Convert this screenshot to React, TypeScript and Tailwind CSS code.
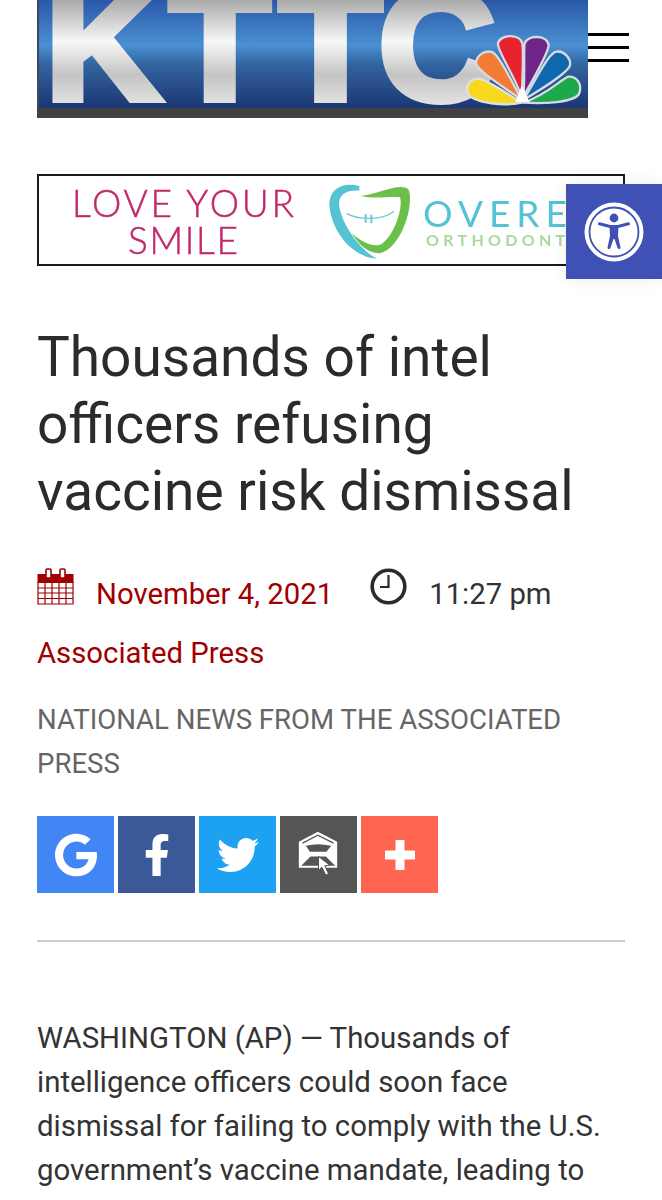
import React from 'react';
import { FaFacebookF, FaGoogle, FaTwitter } from 'react-icons/fa';

const LOGO_LETTERS = [
  { ch: 'K', x: 46, len: 114 },
  { ch: 'T', x: 169.7, len: 100 },
  { ch: 'T', x: 279.6, len: 102 },
  { ch: 'C', x: 379, len: 116 },
];

function KttcLogo() {
  return (
    <svg viewBox="37 0 551 118" className="block w-[551px] h-[118px] blur-[0.5px]">
      <defs>
        <linearGradient id="logoBg" gradientUnits="userSpaceOnUse" x1="0" y1="0" x2="0" y2="108">
          <stop offset="0" stopColor="#2a58a8" />
          <stop offset="0.42" stopColor="#4a90d2" />
          <stop offset="0.6" stopColor="#32649f" />
          <stop offset="1" stopColor="#1b3674" />
        </linearGradient>
        <linearGradient id="logoMetal" gradientUnits="userSpaceOnUse" x1="0" y1="0" x2="0" y2="104">
          <stop offset="0" stopColor="#a9a9a9" />
          <stop offset="0.4" stopColor="#f8f8f8" />
          <stop offset="0.72" stopColor="#c4c4c4" />
          <stop offset="1" stopColor="#e2e2e2" />
        </linearGradient>
      </defs>
      <rect x="37" y="0" width="551" height="109" fill="url(#logoBg)" />
      <rect x="37" y="0" width="2" height="109" fill="#3c4a5e" />
      <rect x="37" y="108" width="551" height="10" fill="#414141" />
      {LOGO_LETTERS.map((l, i) => (
        <text
          key={i}
          x={l.x}
          y="99"
          textLength={l.len}
          lengthAdjust="spacingAndGlyphs"
          fill="url(#logoMetal)"
          stroke="url(#logoMetal)"
          strokeWidth="8"
          fontFamily="Liberation Sans, sans-serif"
          fontWeight="700"
          fontSize="155"
        >
          {l.ch}
        </text>
      ))}
      {/* peacock, traced in 3x crop coordinates */}
      <g transform="translate(440 0) scale(0.3333)" stroke="#d5dbe2" strokeWidth="7">
        <path d="M245,308 C200,318 100,312 84,280 C74,250 100,230 125,238 C160,250 215,290 245,308 Z" fill="#f9d71c" stroke="#dfe2dc" />
        <path d="M245,300 C190,260 115,215 108,190 C110,162 140,148 160,158 C185,175 225,265 245,300 Z" fill="#f47b35" />
        <path d="M245,290 C220,220 170,150 174,130 C180,103 238,100 247,130 C252,160 247,240 245,290 Z" fill="#e9222f" />
        <path d="M250,290 C256,220 250,150 254,130 C265,103 322,105 326,135 C326,160 280,235 250,290 Z" fill="#6f2488" />
        <path d="M250,300 C290,235 320,170 345,156 C370,148 394,175 390,197 C380,222 300,270 250,300 Z" fill="#0f68ad" />
        <path d="M250,308 C320,285 360,240 385,230 C412,228 428,255 417,282 C400,308 310,312 250,308 Z" fill="#1ea84c" />
        <path d="M226,306 L246,255 L268,306 Z" fill="#ffffff" stroke="none" />
      </g>
    </svg>
  );
}

function OrthoBanner() {
  return (
    <div className="border-2 border-[#1a1a1a] h-[92px] overflow-hidden">
      <svg viewBox="39 176 584 88" className="block w-[584px] h-[88px] blur-[0.4px]">
        <g fontFamily="Lato, sans-serif" fontWeight="300" stroke="#c2286c" strokeWidth="0.5">
          <text x="183" y="217" textAnchor="middle" fontSize="37" fill="#c2286c" textLength="222" lengthAdjust="spacing">
            LOVE YOUR
          </text>
          <text x="183" y="254" textAnchor="middle" fontSize="37" fill="#c2286c" textLength="110" lengthAdjust="spacing">
            SMILE
          </text>
        </g>
        <g fontFamily="Lato, sans-serif">
          <text x="423" y="227" fontSize="37" fontWeight="400" fill="#55c3d3" letterSpacing="6">
            OVERE
          </text>
          <text x="426" y="246" fontSize="16" fontWeight="700" fill="#a8d89b" letterSpacing="4.3">
            ORTHODONT
          </text>
        </g>
        <g transform="translate(300 170) scale(0.3333)">
          <path
            d="M178,48 C130,36 88,55 88,105 C92,175 150,262 232,266 C190,248 130,175 118,110 C112,75 140,58 178,62 Z"
            fill="#55c3d3"
          />
          <path
            d="M182,78 C235,72 300,36 325,58 C345,100 305,235 240,250 C205,252 175,222 155,190 C185,215 220,235 245,222 C285,195 310,110 300,82 C270,78 225,88 182,78 Z"
            fill="#6cc04a"
          />
          <path d="M140,130 C170,148 245,155 282,124" fill="none" stroke="#6ec9d6" strokeWidth="4" />
          <path d="M197,132 V158 M214,134 V160" stroke="#6ec9d6" strokeWidth="6" />
        </g>
      </svg>
    </div>
  );
}

function AccessibilityButton() {
  return (
    <div className="absolute left-[566px] top-[184px] w-[96px] h-[95px] bg-[#3f51b5] flex items-center justify-center shadow-[0_0_16px_rgba(0,0,0,0.08)]">
      <svg viewBox="0 0 60 60" className="w-[60px] h-[60px]">
        <circle cx="30" cy="30" r="29.500" fill="#ffffff" />
        <circle cx="30" cy="30" r="24.500" fill="none" stroke="#3f51b5" strokeWidth="1.8" />
        <circle cx="30" cy="16" r="4.400" fill="#3f51b5" />
        <path d="M15.500 21.800 L26 24.500 H34 L44.500 21.800" fill="none" stroke="#3f51b5" strokeWidth="3" strokeLinecap="round" />
        <path
          d="M25.500 24 H34.500 L34 34 L36.500 45.500 C36.500 47.500 34 47.500 33.500 45.800 L30.500 37 H29.500 L26.500 45.800 C26 47.500 23.500 47.500 23.500 45.500 L26 34 Z"
          fill="#3f51b5"
        />
      </svg>
    </div>
  );
}

function CalendarIcon() {
  return (
    <svg viewBox="0 0 37 37" className="w-[37px] h-[37px] shrink-0" fill="none" stroke="#a00000">
      <path d="M0.500 6 H36.500 V15 H0.500 Z" fill="#a00000" stroke="none" />
      <rect x="9" y="1" width="5" height="9" rx="1" fill="#ffffff" strokeWidth="1.6" />
      <rect x="23" y="1" width="5" height="9" rx="1" fill="#ffffff" strokeWidth="1.6" />
      <path
        d="M1 14 V36 H36 V14 M1 20 H36 M1 25 H36 M1 30.500 H36 M8 15 V36 M15 15 V36 M22 15 V36 M29 15 V36"
        strokeWidth="1.2"
      />
    </svg>
  );
}

function ClockIcon() {
  return (
    <svg viewBox="0 0 37 37" className="w-[37px] h-[37px] shrink-0" fill="none" stroke="#2b2b2b">
      <circle cx="18.500" cy="18.500" r="16.300" strokeWidth="3.600" />
      <path d="M18.500 7 V19 H10" strokeWidth="2.200" />
    </svg>
  );
}

function EmailIcon() {
  return (
    <svg viewBox="-4.500 1.500 180 180" className="w-[60px] h-[60px]">
      <path d="M25,52 L82,22 L140,52 V130 H25 Z" fill="#ffffff" />
      <path d="M36,56 L82,32 L129,56" fill="none" stroke="#555555" strokeWidth="4" />
      <path d="M46,64 Q82,54 122,64 L108,82 H58 Z" fill="#555555" />
      <path d="M32,124 L60,96 H106 L134,124 Z" fill="#555555" />
      <path
        d="M84,96 L84,138 L94,128 L106,152 L114,148 L103,124 L118,122 Z"
        fill="#ffffff"
        stroke="#555555"
        strokeWidth="3"
      />
    </svg>
  );
}

function PlusIcon() {
  return (
    <svg viewBox="0 0 30 30" className="w-[30px] h-[30px]" fill="#ffffff">
      <path d="M10.500 0 H19.500 V10.500 H30 V19.500 H19.500 V30 H10.500 V19.500 H0 V10.500 H10.500 Z" />
    </svg>
  );
}

export default function App() {
  return (
    <div className="relative w-[662px] h-[1200px] overflow-hidden bg-white font-['Roboto',sans-serif] text-[#2d2d2d]">
      <header className="flex items-start pl-[37px]">
        <KttcLogo />
        <div className="mt-[33px] flex w-[41px] flex-col gap-[10px]">
          <span className="h-[3px] bg-black" />
          <span className="h-[3px] bg-black" />
          <span className="h-[3px] bg-black" />
        </div>
      </header>

      <main className="px-[37px]">
        <div className="mt-[56px]">
          <OrthoBanner />
        </div>

        <h1 className="mt-[58px] text-[55px] leading-[67px] font-normal text-[#2b2b2b]">
          Thousands of intel officers refusing vaccine risk dismissal
        </h1>

        <div className="mt-[43px] flex items-start text-[29.300px] leading-[44px]">
          <CalendarIcon />
          <span className="ml-[22px] mt-[4px] text-[#a00000]">November 4, 2021</span>
          <span className="ml-[37px]">
            <ClockIcon />
          </span>
          <span className="ml-[22px] mt-[4px] text-[#333333]">11:27 pm</span>
        </div>

        <p className="mt-[15px] text-[29.300px] leading-[44px] text-[#a00000]">Associated Press</p>

        <p className="mt-[23px] text-[27.600px] leading-[44px] text-[#666666]">
          NATIONAL NEWS FROM THE ASSOCIATED PRESS
        </p>

        <div className="mt-[30px] flex gap-[4px]">
          <a className="flex h-[77px] w-[77px] items-center justify-center bg-[#4285f4] text-[44px] text-white">
            <FaGoogle />
          </a>
          <a className="flex h-[77px] w-[77px] items-center justify-center bg-[#3b5998] text-[42px] text-white">
            <FaFacebookF />
          </a>
          <a className="flex h-[77px] w-[77px] items-center justify-center bg-[#1da1f2] text-[42px] text-white">
            <FaTwitter />
          </a>
          <a className="flex h-[77px] w-[77px] items-center justify-center bg-[#555555] text-white">
            <EmailIcon />
          </a>
          <a className="flex h-[77px] w-[77px] items-center justify-center bg-[#ff6550] text-white">
            <PlusIcon />
          </a>
        </div>

        <hr className="mt-[47px] border-t-2 border-[#cccccc]" />

        <p className="mt-[74px] text-[29.400px] leading-[44px] text-[#333333]">
          WASHINGTON (AP) — Thousands of intelligence officers could soon face dismissal for failing to comply with the
          U.S. government’s vaccine mandate, leading to
        </p>
      </main>

      <AccessibilityButton />
    </div>
  );
}
